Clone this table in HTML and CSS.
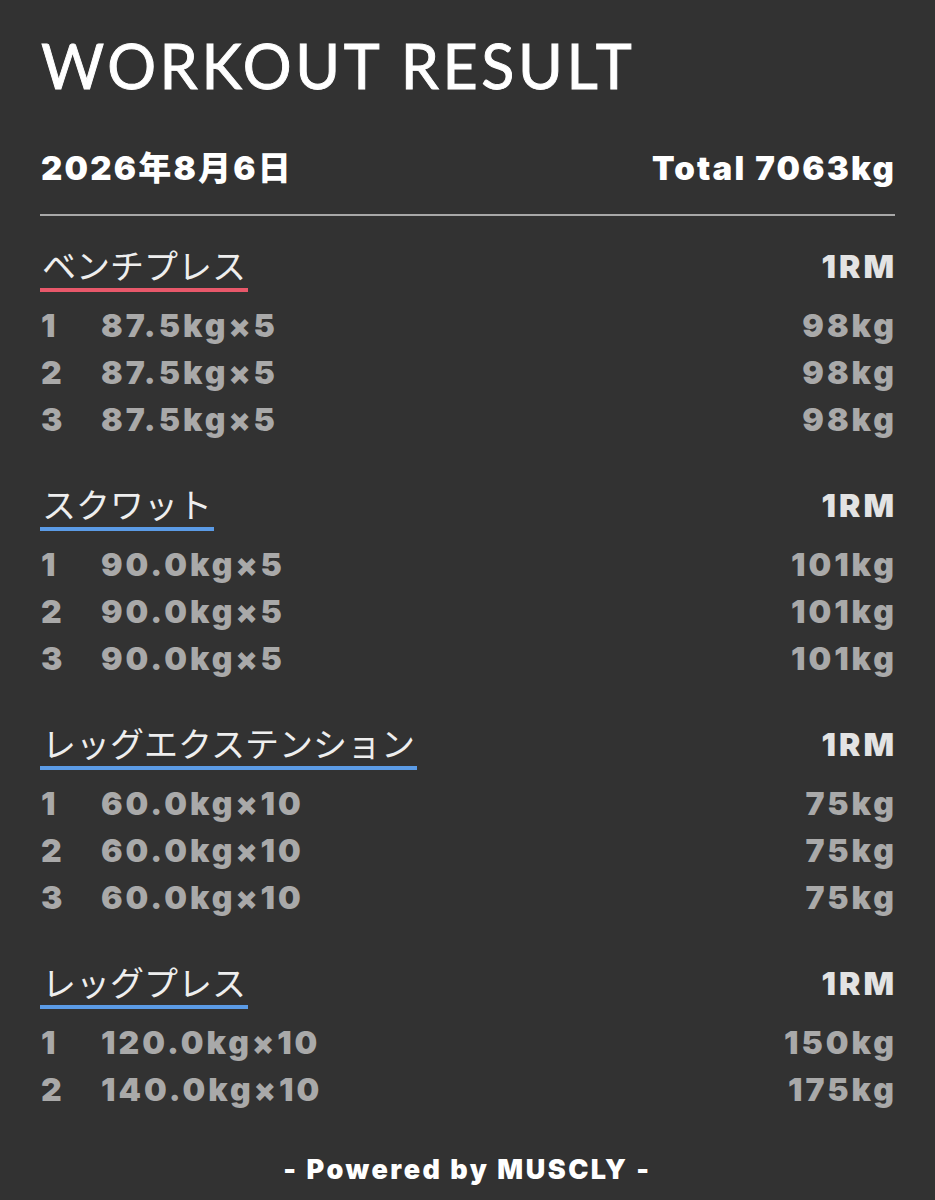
FILE: index.html
```html
<!DOCTYPE html>
<html lang="ja">
<head>
<meta charset="utf-8">
<link rel="stylesheet" href="styles.css">
</head>
<body>
<main class="card">
  <h1 class="title">WORKOUT RESULT</h1>
  <div class="summary">
    <span>2026年8月6日</span>
    <span>Total 7063kg</span>
  </div>
  <hr class="divider">

  <section class="exercise">
    <div class="ex-head">
      <span class="ex-name red">ベンチプレス</span>
      <span class="rm">1RM</span>
    </div>
    <div class="set"><span class="no">1</span><span class="w">87.5kg×5</span><span class="max">98kg</span></div>
    <div class="set"><span class="no">2</span><span class="w">87.5kg×5</span><span class="max">98kg</span></div>
    <div class="set"><span class="no">3</span><span class="w">87.5kg×5</span><span class="max">98kg</span></div>
  </section>

  <section class="exercise">
    <div class="ex-head">
      <span class="ex-name blue">スクワット</span>
      <span class="rm">1RM</span>
    </div>
    <div class="set"><span class="no">1</span><span class="w">90.0kg×5</span><span class="max">101kg</span></div>
    <div class="set"><span class="no">2</span><span class="w">90.0kg×5</span><span class="max">101kg</span></div>
    <div class="set"><span class="no">3</span><span class="w">90.0kg×5</span><span class="max">101kg</span></div>
  </section>

  <section class="exercise">
    <div class="ex-head">
      <span class="ex-name blue">レッグエクステンション</span>
      <span class="rm">1RM</span>
    </div>
    <div class="set"><span class="no">1</span><span class="w">60.0kg×10</span><span class="max">75kg</span></div>
    <div class="set"><span class="no">2</span><span class="w">60.0kg×10</span><span class="max">75kg</span></div>
    <div class="set"><span class="no">3</span><span class="w">60.0kg×10</span><span class="max">75kg</span></div>
  </section>

  <section class="exercise">
    <div class="ex-head">
      <span class="ex-name blue">レッグプレス</span>
      <span class="rm">1RM</span>
    </div>
    <div class="set"><span class="no">1</span><span class="w">120.0kg×10</span><span class="max">150kg</span></div>
    <div class="set"><span class="no">2</span><span class="w">140.0kg×10</span><span class="max">175kg</span></div>
  </section>

  <footer class="powered">- Powered by MUSCLY -</footer>
</main>
</body>
</html>
```

FILE: styles.css
```css
html, body {
  margin: 0;
  padding: 0;
  background: #323232;
}
body {
  width: 935px;
  height: 1200px;
  overflow: hidden;
  font-family: Inter, "Noto Sans CJK JP", sans-serif;
}
.card {
  padding: 0 41px 0 41px;
}
.title {
  margin: 0;
  padding-top: 30px;
  font-family: Lato, "Open Sans", sans-serif;
  font-weight: 400;
  font-size: 61px;
  line-height: 72px;
  color: #ffffff;
  letter-spacing: 3.6px;
  -webkit-text-stroke: 0.9px #ffffff;
}
.summary {
  display: flex;
  justify-content: space-between;
  align-items: baseline;
  margin-top: 46px;
  font-size: 33px;
  line-height: 40px;
  font-weight: 900;
  letter-spacing: 2.2px;
  color: #ffffff;
}
.summary span:last-child {
  margin-right: -2px;
}
.divider {
  margin: 26px -1px 0 -1px;
  border: 0;
  height: 2px;
  background: #a8a8a8;
}
.exercise {
  margin-top: 27px;
}
.exercise + .exercise {
  margin-top: 39px;
}
.ex-head {
  display: flex;
  justify-content: space-between;
  align-items: flex-start;
}
.ex-name {
  font-family: "Noto Sans CJK JP", sans-serif;
  font-weight: 400;
  font-size: 34px;
  line-height: 44px;
  color: #eeeeee;
  padding: 0 2px 1px 2px;
  margin-left: -1px;
  border-bottom: 4px solid #5b9be6;
}
.ex-name.red {
  border-bottom-color: #e8586a;
}
.rm {
  font-size: 32px;
  font-weight: 900;
  letter-spacing: 3px;
  line-height: 44px;
  color: #e3e3e3;
  padding-top: 2px;
  margin-right: -3px;
}
.set {
  display: grid;
  grid-template-columns: 60px 1fr auto;
  font-size: 32px;
  font-weight: 900;
  letter-spacing: 3px;
  line-height: 47px;
  color: #a9a9a9;
}
.set .max {
  margin-right: -3px;
}
.ex-head + .set {
  margin-top: 10px;
}
.powered {
  margin-top: 40px;
  text-align: center;
  font-size: 27px;
  font-weight: 900;
  letter-spacing: 2.5px;
  color: #ffffff;
}
```
